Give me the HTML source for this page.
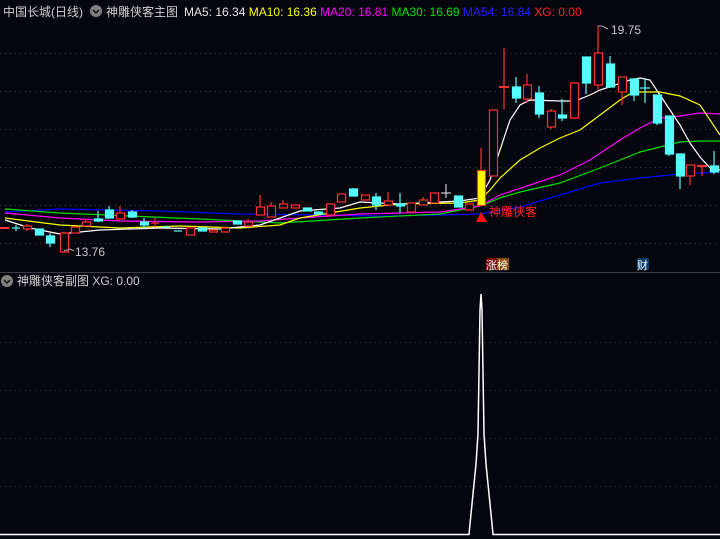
<!DOCTYPE html>
<html><head><meta charset="utf-8"><style>
body{margin:0;background:#05050d;width:720px;height:539px;overflow:hidden;font-family:"Liberation Sans","Noto Sans CJK SC",sans-serif}
svg{position:absolute;left:0;top:0}
</style></head><body>
<svg width="720" height="539" xmlns="http://www.w3.org/2000/svg" font-family="Liberation Sans, Noto Sans CJK SC, sans-serif">
<rect width="720" height="539" fill="#05050d"/>
<g stroke="#3a3a44" stroke-dasharray="1,4" stroke-width="1">
<line x1="0" y1="53.5" x2="720" y2="53.5"/><line x1="0" y1="91.5" x2="720" y2="91.5"/><line x1="0" y1="129.5" x2="720" y2="129.5"/><line x1="0" y1="167.5" x2="720" y2="167.5"/><line x1="0" y1="205.5" x2="720" y2="205.5"/><line x1="0" y1="243.5" x2="720" y2="243.5"/>
<line x1="0" y1="342.5" x2="720" y2="342.5"/><line x1="0" y1="390.5" x2="720" y2="390.5"/><line x1="0" y1="438.5" x2="720" y2="438.5"/><line x1="0" y1="486.5" x2="720" y2="486.5"/>
</g>
<line x1="0" y1="272.5" x2="720" y2="272.5" stroke="#3c3c44"/>
<!-- MA lines -->
<g fill="none" stroke-width="1.2">
<polyline stroke="#0000ff" points="5,212 60,209 160,211 240,214 320,215 380,216 440,215 480,214 520,207 560,195 600,183 640,178 660,176 680,174 720,172"/>
<polyline stroke="#00e000" points="5,209 60,213 200,219 280,223 360,218 440,214 480,206 500,198 520,192 560,183 600,168 640,152 660,147 680,142 700,141 720,141"/>
<polyline stroke="#ff00ff" points="5,213 60,218 120,221 200,222 260,221 300,218 360,214 440,212 480,206 500,195 530,185 560,175 590,160 620,140 640,128 660,118 680,116 700,113 720,114"/>
<polyline stroke="#ffff00" points="5,218 60,225 120,228 180,226 240,228 280,225 300,218 360,208 400,204 460,203 480,200 490,190 500,178 520,160 540,148 560,138 580,130 600,115 620,100 630,94 640,92 660,92 680,96 700,105 720,135"/>
<polyline stroke="#ffffff" points="5,220 30,228 60,234 100,230 160,228 220,229 260,225 300,211 340,208 360,202 400,204 460,201 480,198 490,180 500,150 510,120 520,105 530,100 560,101 575,101 590,95 600,90 615,85 630,80 640,78 650,80 660,95 670,110 680,125 690,143 700,157 710,168 720,170"/>
</g>
<!-- candles -->
<g stroke-width="1.2">
<!-- red hollow: [x, top, bot, wt, wb] -->
<g stroke="#ff3030" fill="#05050d">
<line x1="27" y1="224" x2="27" y2="231"/><rect x="23.5" y="226" width="8" height="3"/>
<line x1="64" y1="232" x2="64" y2="252"/><rect x="60.5" y="233" width="8" height="19"/>
<rect x="71.5" y="227" width="8" height="6"/>
<line x1="86" y1="219" x2="86" y2="226"/><rect x="82.5" y="222" width="8" height="4"/>
<line x1="120" y1="206" x2="120" y2="219"/><rect x="116.5" y="213" width="8" height="6"/>
<line x1="155" y1="218" x2="155" y2="227"/><line x1="151" y1="223" x2="159" y2="223"/>
<rect x="186.5" y="228" width="8" height="7"/>
<rect x="209.5" y="230" width="8" height="2"/>
<rect x="221.5" y="228" width="8" height="4"/>
<line x1="248" y1="219" x2="248" y2="226"/><rect x="244.5" y="222" width="8" height="4"/>
<line x1="260" y1="195" x2="260" y2="215"/><rect x="256.5" y="207" width="8" height="8"/>
<line x1="271" y1="202" x2="271" y2="217"/><rect x="267.5" y="206" width="8" height="11"/>
<line x1="283" y1="200" x2="283" y2="208"/><rect x="279.5" y="204" width="8" height="4"/>
<rect x="291.5" y="205" width="8" height="3"/>
<rect x="326.5" y="204" width="8" height="11"/>
<rect x="337.5" y="194" width="8" height="8"/>
<rect x="361.5" y="195" width="8" height="5"/>
<line x1="388" y1="192" x2="388" y2="205"/><rect x="384.5" y="201" width="8" height="4"/>
<rect x="407.5" y="203" width="8" height="9"/>
<line x1="423" y1="197" x2="423" y2="205"/><rect x="419.5" y="200" width="8" height="5"/>
<rect x="430.5" y="193" width="8" height="10"/>
<rect x="465.5" y="204" width="8" height="6"/>
<line x1="481" y1="148" x2="481" y2="170"/>
<rect x="489.5" y="110" width="8" height="66"/>
<line x1="504" y1="48" x2="504" y2="109"/><line x1="499" y1="87" x2="509" y2="87" stroke-width="2"/>
<line x1="527" y1="74" x2="527" y2="102"/><rect x="523.5" y="85" width="8" height="14"/>
<line x1="551" y1="109" x2="551" y2="129"/><rect x="547.5" y="111" width="8" height="16"/>
<line x1="574" y1="82" x2="574" y2="119"/><rect x="570.5" y="83" width="8" height="35"/>
<line x1="598" y1="26" x2="598" y2="90"/><rect x="594.5" y="53" width="8" height="32"/>
<line x1="622" y1="77" x2="622" y2="105"/><rect x="618.5" y="77" width="8" height="15"/>
<line x1="690" y1="165" x2="690" y2="185"/><rect x="686.5" y="165" width="8" height="11"/>
<line x1="702" y1="165" x2="702" y2="176"/><line x1="697" y1="166" x2="707" y2="166" stroke-width="2"/>
<line x1="4" y1="228" x2="4" y2="228"/><line x1="0" y1="228" x2="9" y2="228" stroke-width="2"/>
</g>
<g stroke="#55ffff" fill="#55ffff">
<line x1="16" y1="225" x2="16" y2="231"/><line x1="12" y1="228" x2="20" y2="228"/>
<rect x="35.5" y="229" width="8" height="6"/>
<line x1="50" y1="233" x2="50" y2="247"/><rect x="46.5" y="236" width="8" height="7"/>
<line x1="98" y1="211" x2="98" y2="222"/><rect x="94.5" y="219" width="8" height="2"/>
<line x1="109" y1="206" x2="109" y2="219"/><rect x="105.5" y="210" width="8" height="8"/>
<line x1="132" y1="210" x2="132" y2="218"/><rect x="128.5" y="212" width="8" height="5"/>
<line x1="144" y1="218" x2="144" y2="229"/><rect x="140.5" y="222" width="8" height="3"/>
<line x1="162" y1="227" x2="170" y2="227"/><line x1="174" y1="231" x2="182" y2="231"/>
<rect x="198.5" y="228" width="8" height="3"/>
<rect x="233.5" y="221" width="8" height="3"/>
<rect x="303.5" y="208" width="8" height="3"/>
<rect x="314.5" y="212" width="8" height="2"/>
<line x1="353" y1="188" x2="353" y2="196"/><rect x="349.5" y="189" width="8" height="7"/>
<line x1="376" y1="193" x2="376" y2="210"/><rect x="372.5" y="197" width="8" height="8"/>
<line x1="400" y1="193" x2="400" y2="213"/><rect x="396.5" y="204" width="8" height="2"/>
<rect x="454.5" y="196" width="8" height="11"/>
<line x1="516" y1="77" x2="516" y2="103"/><rect x="512.5" y="87" width="8" height="11"/>
<line x1="539" y1="86" x2="539" y2="118"/><rect x="535.5" y="93" width="8" height="21"/>
<line x1="562" y1="99" x2="562" y2="121"/><rect x="558.5" y="115" width="8" height="3"/>
<line x1="586" y1="57" x2="586" y2="94"/><rect x="582.5" y="57" width="8" height="26"/>
<line x1="610" y1="56" x2="610" y2="88"/><rect x="606.5" y="64" width="8" height="23"/>
<line x1="634" y1="78" x2="634" y2="101"/><rect x="630.5" y="79" width="8" height="16"/>
<line x1="645" y1="79" x2="645" y2="103"/><line x1="640" y1="88" x2="650" y2="88"/>
<line x1="657" y1="95" x2="657" y2="125"/><rect x="653.5" y="95" width="8" height="28"/>
<line x1="669" y1="116" x2="669" y2="156"/><rect x="665.5" y="116" width="8" height="38"/>
<line x1="680" y1="154" x2="680" y2="189"/><rect x="676.5" y="154" width="8" height="22"/>
<line x1="714" y1="151" x2="714" y2="174"/><rect x="710.5" y="166" width="8" height="6"/>
</g>
<g stroke="#cccccc"><line x1="446" y1="184" x2="446" y2="198"/><line x1="441" y1="193" x2="451" y2="193"/></g>
<rect x="477.5" y="170.5" width="8" height="35" fill="#ffff00" stroke="#ff3030"/>
</g>
<!-- markers -->
<polygon points="481,212 476,222 487,222" fill="#ff1010"/>
<text x="489" y="216" font-size="12" fill="#ff2020">神雕侠客</text>
<polyline points="598,26 602,26 608,29" fill="none" stroke="#aaa"/>
<text x="611" y="34" font-size="12" fill="#c8c8c8">19.75</text>
<polyline points="64,251 70,249 74,251" fill="none" stroke="#aaa"/>
<text x="75" y="256" font-size="12" fill="#c8c8c8">13.76</text>
<rect x="486" y="258" width="11" height="12" fill="#7a0008"/><rect x="497" y="258" width="12" height="12" fill="#8a4a08"/>
<text x="486" y="269" font-size="11" fill="#fff">涨榜</text>
<rect x="637" y="258" width="12" height="12" fill="#0a3a6a"/>
<text x="637" y="269" font-size="11" fill="#fff">财</text>
<!-- header -->
<text x="3" y="16" font-size="12" fill="#d0d0d0">中国长城(日线)</text>
<circle cx="96" cy="11" r="6" fill="#808080"/><polyline points="93,10 96,13 99,10" fill="none" stroke="#111" stroke-width="1.5"/>
<text x="106" y="16" font-size="12" fill="#d0d0d0">神雕侠客主图</text>
<text x="184" y="16" font-size="12"><tspan fill="#e8e8e8">MA5: 16.34 </tspan><tspan fill="#ffff00">MA10: 16.36 </tspan><tspan fill="#ff00ff">MA20: 16.81 </tspan><tspan fill="#00e000">MA30: 16.69 </tspan><tspan fill="#2020ff">MA54: 16.84 </tspan><tspan fill="#ff2020">XG: 0.00</tspan></text>
<circle cx="7" cy="281" r="6" fill="#808080"/><polyline points="4,280 7,283 10,280" fill="none" stroke="#111" stroke-width="1.5"/>
<text x="17" y="285" font-size="12" fill="#d0d0d0">神雕侠客副图  XG: 0.00</text>
<!-- sub -->
<polyline points="0,534.5 469,534.5 470,524 472,504 474,484 476,464 478,434 480,310 481,294 482,310 484,434 486,464 488,484 490,504 492,524 493,534.5 720,534.5" fill="none" stroke="#ffffff" stroke-width="1.5"/>
</svg>
</body></html>
